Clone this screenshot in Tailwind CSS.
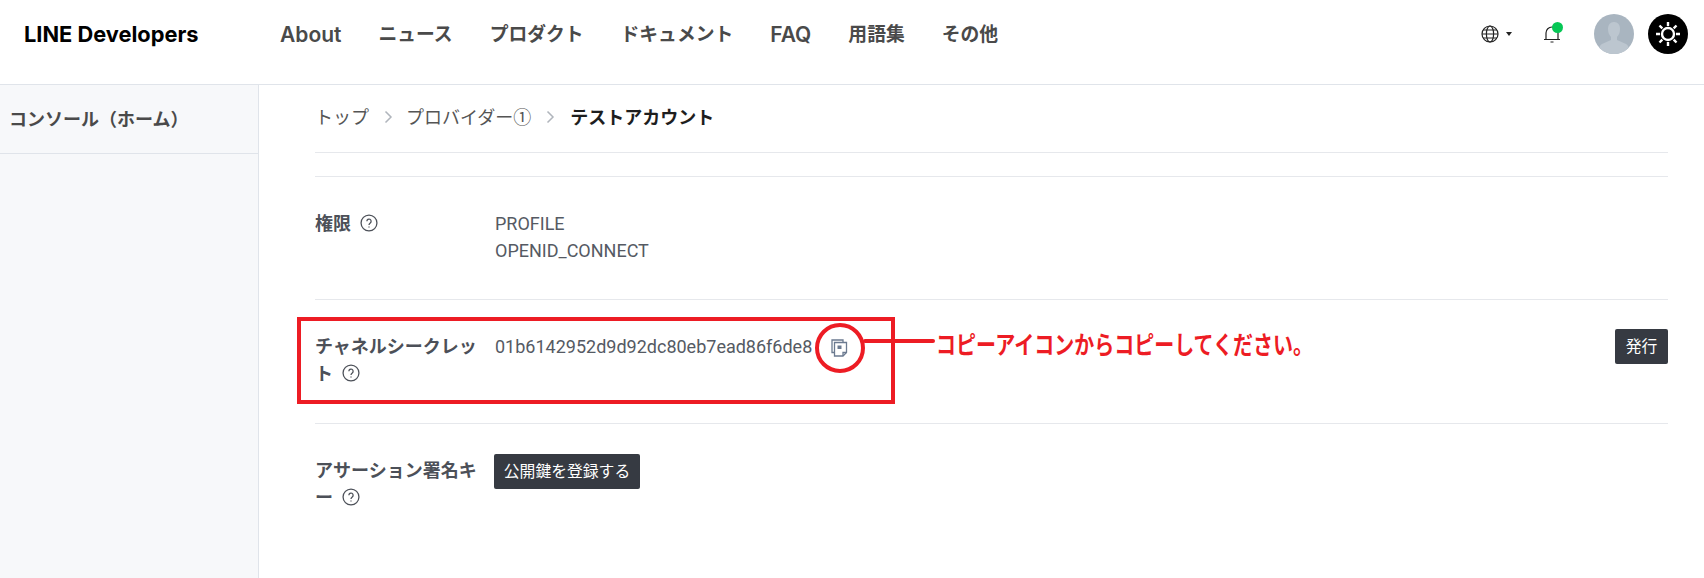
<!DOCTYPE html>
<html lang="ja">
<head>
<meta charset="utf-8">
<title>LINE Developers</title>
<script src="https://cdn.jsdelivr.net/npm/@tailwindcss/browser@4"></script>
</head>
<body class="bg-white font-['Roboto','Noto_Sans_CJK_JP',sans-serif] text-[#555a63]">
<div class="relative w-[1704px] h-[578px] overflow-hidden">

  <!-- top nav -->
  <header class="h-[85px] border-b border-[#e0e4ea] flex items-center pb-[16px]">
    <div class="w-[280px] pl-[24px] pt-[1px] font-['Inter','Noto_Sans_CJK_JP',sans-serif] font-bold text-[21.800px] text-black">LINE Developers</div>
    <nav class="flex items-center gap-[37px] pt-[2px] font-['Inter','Noto_Sans_CJK_JP',sans-serif] font-bold text-[18.8px] text-[#4a4a4a]">
      <a class="text-[21px] font-semibold">About</a><a>ニュース</a><a>プロダクト</a><a>ドキュメント</a><a class="text-[21px] font-semibold">FAQ</a><a>用語集</a><a>その他</a>
    </nav>
    <div class="ml-auto flex items-center pr-[16px]">
      <svg class="w-[18px] h-[18px]" viewBox="0 0 18 18" fill="none" stroke="#222" stroke-width="1.2"><circle cx="9" cy="9" r="8"/><ellipse cx="9" cy="9" rx="3.6" ry="8"/><path d="M1 9h16M2 5h14M2 13h14"/></svg>
      <svg class="ml-[7px] w-[6px] h-[4px]" viewBox="0 0 6 4" fill="#222"><path d="M0 0h6L3 4z"/></svg>
      <div class="relative ml-[31px] w-[18px] h-[20px]">
        <svg class="w-[18px] h-[20px]" viewBox="0 0 18 20" fill="none" stroke="#222" stroke-width="1.2"><path d="M3 15V9a6 6 0 0 1 12 0v6M1 15.500h16M7.500 18h3"/></svg>
        <span class="absolute -top-[2px] left-[9px] w-[11px] h-[11px] rounded-full bg-[#06c755]"></span>
      </div>
      <div class="ml-[33px] w-[40px] h-[40px] rounded-full bg-[#a9b5c0] overflow-hidden">
        <svg class="w-[40px] h-[40px]" viewBox="0 0 40 40" fill="#bcc6cf"><path d="M20 8c-4 0-6 3-6 7 0 3 1 6 3 8v3l-9 4c-2 1-3 3-3 10h30c0-7-1-9-3-10l-9-4v-3c2-2 3-5 3-8 0-4-2-7-6-7z"/></svg>
      </div>
      <div class="ml-[14px] w-[40px] h-[40px] rounded-full bg-black flex items-center justify-center">
        <svg class="w-[28px] h-[28px]" viewBox="0 0 28 28" fill="none" stroke="#fff" stroke-width="2.400"><circle cx="14" cy="14" r="6"/><path d="M14 2v4M14 22v4M2 14h4M22 14h4M5.500 5.500l2.800 2.800M19.700 19.700l2.800 2.800M5.500 22.500l2.800-2.800M19.700 8.300l2.800-2.800"/></svg>
      </div>
    </div>
  </header>

  <div class="flex h-[493px]">
    <!-- side menu -->
    <aside class="w-[259px] shrink-0 bg-[#f7f8fa] border-r border-[#e0e4ea]">
      <div class="h-[69px] border-b border-[#e0e4ea] flex items-center pl-[9px] font-bold text-[18px] text-[#4a4a4a]">コンソール（ホーム）</div>
    </aside>

    <main class="flex-1 pl-[56px] pr-[36px] text-[18px]">
      <div class="h-[68px] border-b border-[#e6e8ec] flex items-center pb-[3px]">
        <span class="text-[#555]">トップ</span>
        <svg class="ml-[15px] mr-[13px] w-[9px] h-[14px]" viewBox="0 0 9 14" fill="none" stroke="#b0b5bc" stroke-width="1.5"><path d="M1.500 1.500 7 7l-5.500 5.500"/></svg>
        <span class="text-[#555]">プロバイダー①</span>
        <svg class="mx-[15px] w-[9px] h-[14px]" viewBox="0 0 9 14" fill="none" stroke="#b0b5bc" stroke-width="1.5"><path d="M1.500 1.500 7 7l-5.500 5.500"/></svg>
        <span class="font-bold text-[#1e1e1e]">テストアカウント</span>
      </div>
      <div class="h-[24px] border-b border-[#e6e8ec]"></div>

      <div class="h-[123px] border-b border-[#e6e8ec] flex pt-[33px]">
        <div class="w-[180px] shrink-0 font-bold leading-[27px] pr-[12px] text-[#4c5058]">権限
          <svg class="inline-block ml-[5px] align-[-2px] w-[18px] h-[18px]" viewBox="0 0 17 17" fill="none" stroke="#4c5058" stroke-width="1.200"><circle cx="8.500" cy="8.500" r="7.500"/><path d="M6.500 6.800a2 2 0 1 1 3.200 1.600c-.8.600-1.200 1-1.200 1.900M8.500 11.800v1"/></svg>
        </div>
        <div class="leading-[27px]">PROFILE<br>OPENID_CONNECT</div>
      </div>

      <div class="h-[124px] border-b border-[#e6e8ec] flex pt-[33px]">
        <div class="w-[180px] shrink-0 font-bold leading-[27px] pr-[12px] text-[#4c5058]">チャネルシークレット
          <svg class="inline-block ml-[5px] align-[-2px] w-[18px] h-[18px]" viewBox="0 0 17 17" fill="none" stroke="#4c5058" stroke-width="1.200"><circle cx="8.500" cy="8.500" r="7.500"/><path d="M6.500 6.800a2 2 0 1 1 3.200 1.600c-.8.600-1.200 1-1.200 1.900M8.500 11.800v1"/></svg>
        </div>
        <div class="flex items-start leading-[27px]">
          <span>01b6142952d9d92dc80eb7ead86f6de8</span>
          <svg class="ml-[19px] mt-[6px] w-[17px] h-[18px]" viewBox="0 0 17 18" fill="none" stroke="#6b7a90" stroke-width="1.300"><path d="M3 13.500H1V1h11v2"/><path d="M3.500 3.500h12v10l-3.500 3.500H3.500z"/><path d="M15.500 13.500H12V17"/><path d="M6.500 6.500h4v3.500h-4z" fill="#6b7a90" stroke="none"/></svg>
        </div>
        <button class="ml-auto h-[35px] w-[53px] -mt-[4px] bg-[#363a42] rounded-[2px] text-white text-[15.800px]">発行</button>
      </div>

      <div class="flex pt-[33px]">
        <div class="w-[180px] shrink-0 font-bold leading-[27px] pr-[12px] text-[#4c5058]">アサーション署名キー
          <svg class="inline-block ml-[5px] align-[-2px] w-[18px] h-[18px]" viewBox="0 0 17 17" fill="none" stroke="#4c5058" stroke-width="1.200"><circle cx="8.500" cy="8.500" r="7.500"/><path d="M6.500 6.800a2 2 0 1 1 3.200 1.600c-.8.600-1.200 1-1.200 1.900M8.500 11.800v1"/></svg>
        </div>
        <button class="h-[35px] w-[146px] -mt-[3px] bg-[#363a42] rounded-[2px] text-white text-[15.800px] -ml-[1px]">公開鍵を登録する</button>
      </div>
    </main>
  </div>

  <!-- red annotation drawn over the page -->
  <div class="absolute left-[297px] top-[317px] w-[598px] h-[87px] border-[4px] border-[#ed1c24]"></div>
  <div class="absolute left-[815px] top-[323px] w-[50px] h-[50px] rounded-full border-[4px] border-[#ed1c24]"></div>
  <div class="absolute left-[863px] top-[339px] w-[72px] h-[4px] rounded-full bg-[#ed1c24]"></div>
  <div class="absolute left-[936px] top-[328px] origin-left scale-x-[.8] whitespace-nowrap font-bold text-[25px] leading-[36px] text-[#ed1c24]">コピーアイコンからコピーしてください。</div>
</div>
</body>
</html>
